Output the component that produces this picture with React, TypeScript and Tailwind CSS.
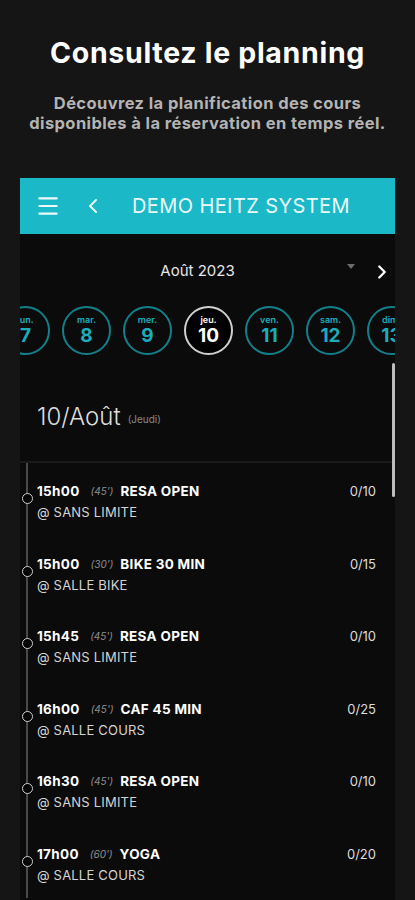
import { ChevronLeft, ChevronRight, Menu } from 'lucide-react'

type Day = { label: string; num: string; selected?: boolean }

const days: Day[] = [
  { label: 'lun.', num: '7' },
  { label: 'mar.', num: '8' },
  { label: 'mer.', num: '9' },
  { label: 'jeu.', num: '10', selected: true },
  { label: 'ven.', num: '11' },
  { label: 'sam.', num: '12' },
  { label: 'dim.', num: '13' },
]

type Session = { time: string; duration: string; name: string; place: string; count: string }

const sessions: Session[] = [
  { time: '15h00', duration: "(45')", name: 'RESA OPEN', place: '@ SANS LIMITE', count: '0/10' },
  { time: '15h00', duration: "(30')", name: 'BIKE 30 MIN', place: '@ SALLE BIKE', count: '0/15' },
  { time: '15h45', duration: "(45')", name: 'RESA OPEN', place: '@ SANS LIMITE', count: '0/10' },
  { time: '16h00', duration: "(45')", name: 'CAF 45 MIN', place: '@ SALLE COURS', count: '0/25' },
  { time: '16h30', duration: "(45')", name: 'RESA OPEN', place: '@ SANS LIMITE', count: '0/10' },
  { time: '17h00', duration: "(60')", name: 'YOGA', place: '@ SALLE COURS', count: '0/20' },
]

function DayCircle({ day }: { day: Day }) {
  return (
    <div
      className={`flex h-[49px] w-[49px] shrink-0 flex-col items-center justify-center rounded-full border-2 ${
        day.selected ? 'border-[#cfcfcf] bg-black text-white' : 'border-[#137f8a] text-[#1aaebd]'
      }`}
    >
      <span className="text-[9px] font-semibold leading-[10px]">{day.label}</span>
      <span className="text-[19px] font-bold leading-[21px]">{day.num}</span>
    </div>
  )
}

function SessionRow({ s }: { s: Session }) {
  return (
    <div className="relative h-[72.5px] pl-[15px] pr-[19px] pt-[19px]">
      {/* timeline dot */}
      <div className="absolute left-0 top-[30px] h-[11px] w-[11px] rounded-full border-[1.5px] border-[#d0d0d0] bg-black" />
      <div className="flex items-center justify-between">
        <div className="flex items-center text-[13.5px] font-bold leading-[18px] tracking-[0.3px] text-white">
          <span>{s.time}</span>
          <span className="ml-[11px] mr-[7px] text-[10px] font-normal italic tracking-normal text-[#8f8f8f]">
            {s.duration}
          </span>
          <span>{s.name}</span>
        </div>
        <span className="text-[13px] leading-[18px] text-[#dcdcdc]">{s.count}</span>
      </div>
      <div className="mt-[3px] text-[13px] leading-[18px] tracking-[0.2px] text-[#d4d4d4]">{s.place}</div>
    </div>
  )
}

export default function App() {
  return (
    <div className="h-[900px] w-[415px] overflow-hidden bg-[#151515] font-['Inter',sans-serif]">
      {/* Intro */}
      <div className="pt-[36px] text-center">
        <h1 className="text-[28.5px] font-bold leading-[34px] tracking-[0.7px] text-white">
          Consultez le planning
        </h1>
        <p className="mt-[23px] text-[16.5px] font-bold leading-[20px] tracking-[0.4px] text-[#b3b3b3]">
          Découvrez la planification des cours
          <br />
          disponibles à la réservation en temps réel.
        </p>
      </div>

      {/* Phone screen */}
      <div className="relative mx-[20px] mt-[45px] h-[722px] overflow-hidden bg-[#0b0b0b]">
        {/* App bar */}
        <div className="flex h-[56px] items-center bg-[#1bb8c7] pl-[15px] text-[#eafafb]">
          <Menu className="h-[26px] w-[26px]" strokeWidth={2} />
          <ChevronLeft className="ml-[20px] h-[24px] w-[24px]" strokeWidth={2} />
          <span className="ml-[27px] text-[20px] font-normal tracking-[0.4px]">DEMO HEITZ SYSTEM</span>
        </div>

        {/* Month */}
        <div className="relative h-[72px] pt-[24px] text-center">
          <span className="ml-[-20px] text-[15px] leading-[20px] text-[#e6e6e6]">Août 2023</span>
          <span className="absolute right-[40px] top-[30px] h-0 w-0 border-x-[4px] border-t-[5px] border-x-transparent border-t-[#6d6d6d]" />
          <ChevronRight className="absolute right-[2px] top-[27px] h-[22px] w-[22px] text-white" strokeWidth={2.5} />
        </div>

        {/* Days */}
        <div className="ml-[-19px] flex gap-[12px]">
          {days.map((d) => (
            <DayCircle key={d.num} day={d} />
          ))}
        </div>

        {/* Date header */}
        <div className="mt-[5px] flex h-[103px] items-center border-b-2 border-[#1a1a1a] pl-[17px] pt-[12px]">
          <span className="text-[24px] font-light text-[#dedede]">10/Août</span>
          <span className="ml-[7px] mt-[6px] text-[10px] text-[#8a8a8a]">(Jeudi)</span>
        </div>

        {/* Sessions with timeline */}
        <div className="relative pl-[2px]">
          <div className="absolute bottom-0 left-[6px] top-0 w-[2px] bg-[#4a4a4a]" />
          {sessions.map((s, i) => (
            <SessionRow key={i} s={s} />
          ))}
        </div>

        {/* Scrollbar */}
        <div className="absolute right-0 top-[185px] h-[134px] w-[3px] rounded-full bg-[#bdbdbd]" />
      </div>
    </div>
  )
}
